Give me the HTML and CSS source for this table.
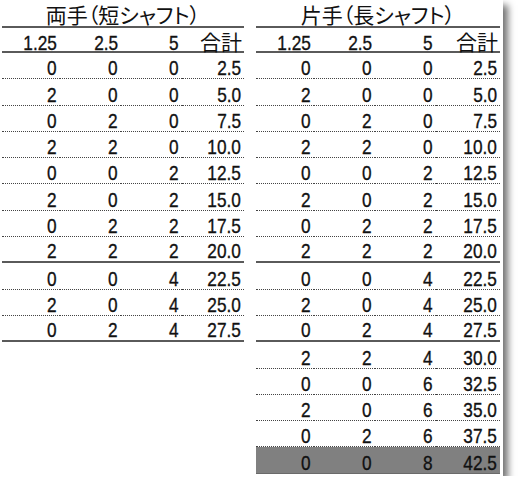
FILE: index.html
```html
<!DOCTYPE html>
<html lang="ja">
<head>
<meta charset="utf-8">
<title>シャフト重量表</title>
<link rel="stylesheet" href="styles.css">
</head>
<body>
<div class="sheet">
  <div class="tbl left">
    <div class="title">両手（短シャフト）</div>
    <div class="c h"><span>1.25</span></div><div class="c h"><span>2.5</span></div><div class="c h"><span>5</span></div><div class="c h jp">合計</div>
    <div class="c"><span>0</span></div><div class="c"><span>0</span></div><div class="c"><span>0</span></div><div class="c"><span>2.5</span></div>
    <div class="c"><span>2</span></div><div class="c"><span>0</span></div><div class="c"><span>0</span></div><div class="c"><span>5.0</span></div>
    <div class="c"><span>0</span></div><div class="c"><span>2</span></div><div class="c"><span>0</span></div><div class="c"><span>7.5</span></div>
    <div class="c"><span>2</span></div><div class="c"><span>2</span></div><div class="c"><span>0</span></div><div class="c"><span>10.0</span></div>
    <div class="c"><span>0</span></div><div class="c"><span>0</span></div><div class="c"><span>2</span></div><div class="c"><span>12.5</span></div>
    <div class="c"><span>2</span></div><div class="c"><span>0</span></div><div class="c"><span>2</span></div><div class="c"><span>15.0</span></div>
    <div class="c"><span>0</span></div><div class="c"><span>2</span></div><div class="c"><span>2</span></div><div class="c"><span>17.5</span></div>
    <div class="c s"><span>2</span></div><div class="c s"><span>2</span></div><div class="c s"><span>2</span></div><div class="c s"><span>20.0</span></div>
    <div class="c"><span>0</span></div><div class="c"><span>0</span></div><div class="c"><span>4</span></div><div class="c"><span>22.5</span></div>
    <div class="c"><span>2</span></div><div class="c"><span>0</span></div><div class="c"><span>4</span></div><div class="c"><span>25.0</span></div>
    <div class="c s"><span>0</span></div><div class="c s"><span>2</span></div><div class="c s"><span>4</span></div><div class="c s"><span>27.5</span></div>
  </div>
  <div class="tbl right">
    <div class="title">片手（長シャフト）</div>
    <div class="c h"><span>1.25</span></div><div class="c h"><span>2.5</span></div><div class="c h"><span>5</span></div><div class="c h jp">合計</div>
    <div class="c"><span>0</span></div><div class="c"><span>0</span></div><div class="c"><span>0</span></div><div class="c"><span>2.5</span></div>
    <div class="c"><span>2</span></div><div class="c"><span>0</span></div><div class="c"><span>0</span></div><div class="c"><span>5.0</span></div>
    <div class="c"><span>0</span></div><div class="c"><span>2</span></div><div class="c"><span>0</span></div><div class="c"><span>7.5</span></div>
    <div class="c"><span>2</span></div><div class="c"><span>2</span></div><div class="c"><span>0</span></div><div class="c"><span>10.0</span></div>
    <div class="c"><span>0</span></div><div class="c"><span>0</span></div><div class="c"><span>2</span></div><div class="c"><span>12.5</span></div>
    <div class="c"><span>2</span></div><div class="c"><span>0</span></div><div class="c"><span>2</span></div><div class="c"><span>15.0</span></div>
    <div class="c"><span>0</span></div><div class="c"><span>2</span></div><div class="c"><span>2</span></div><div class="c"><span>17.5</span></div>
    <div class="c s"><span>2</span></div><div class="c s"><span>2</span></div><div class="c s"><span>2</span></div><div class="c s"><span>20.0</span></div>
    <div class="c"><span>0</span></div><div class="c"><span>0</span></div><div class="c"><span>4</span></div><div class="c"><span>22.5</span></div>
    <div class="c"><span>2</span></div><div class="c"><span>0</span></div><div class="c"><span>4</span></div><div class="c"><span>25.0</span></div>
    <div class="c s"><span>0</span></div><div class="c s"><span>2</span></div><div class="c s"><span>4</span></div><div class="c s"><span>27.5</span></div>
    <div class="c"><span>2</span></div><div class="c"><span>2</span></div><div class="c"><span>4</span></div><div class="c"><span>30.0</span></div>
    <div class="c"><span>0</span></div><div class="c"><span>0</span></div><div class="c"><span>6</span></div><div class="c"><span>32.5</span></div>
    <div class="c"><span>2</span></div><div class="c"><span>0</span></div><div class="c"><span>6</span></div><div class="c"><span>35.0</span></div>
    <div class="c"><span>0</span></div><div class="c"><span>2</span></div><div class="c"><span>6</span></div><div class="c"><span>37.5</span></div>
    <div class="c g"><span>0</span></div><div class="c g"><span>0</span></div><div class="c g"><span>8</span></div><div class="c g"><span>42.5</span></div>
  </div>
</div>
</body>
</html>
```

FILE: styles.css
```css
html, body {
  margin: 0;
  padding: 0;
  background: #fff;
}

.sheet {
  width: 503px;
  height: 476px;
  box-sizing: border-box;
  padding-left: 2px;
  background: #fff;
  box-shadow: 5px 5px 7px rgba(0, 0, 0, 0.55);
  display: flex;
  align-items: flex-start;
  gap: 12px;
  color: #111;
  font-family: "Liberation Sans", "Noto Sans CJK JP", sans-serif;
}

.tbl {
  display: grid;
  grid-template-columns: 58px 61px 61px 1fr;
}

.left { width: 242px; }
.right { width: 244px; }

.title {
  grid-column: 1 / -1;
  height: 28px;
  box-sizing: border-box;
  padding-top: 2px;
  border-bottom: 2px solid #5a5a5a;
  text-align: center;
  font-family: "Noto Sans CJK JP", sans-serif;
  font-feature-settings: "palt";
  font-size: 21px;
  line-height: 24px;
}

.c {
  height: 26.3px;
  box-sizing: border-box;
  border-bottom: 1px dotted #444;
  display: flex;
  justify-content: flex-end;
  align-items: flex-end;
  padding: 0 3px 0 0;
  font-size: 21px;
  line-height: 21px;
}

.c span {
  display: inline-block;
  transform: scaleX(0.82);
  transform-origin: right bottom;
  -webkit-text-stroke: 0.35px currentColor;
}

.c.h {
  height: 25px;
  border-bottom: 2px solid #5a5a5a;
  line-height: 17px;
}

.c.jp {
  font-family: "Noto Sans CJK JP", sans-serif;
  font-size: 21px;
  line-height: 20px;
  padding-right: 2px;
}

.c.s {
  border-bottom: 2px solid #5a5a5a;
}

.c.g {
  background: #808080;
  border-bottom: 1px solid #6a6a6a;
}
```
